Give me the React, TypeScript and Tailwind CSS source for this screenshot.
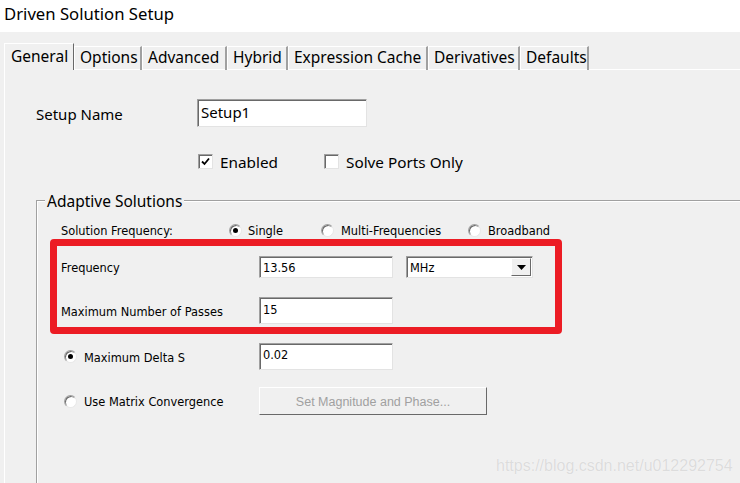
import React from "react";

const big = { fontFamily: '"Noto Sans", "Open Sans", sans-serif' };
const small = { fontFamily: '"DejaVu Sans", Verdana, sans-serif' };

function Sunken({ className = "", children }: { className?: string; children?: React.ReactNode }) {
  return (
    <div
      className={`bg-white border border-t-[#a0a0a0] border-l-[#a0a0a0] border-r-[#e3e3e3] border-b-[#e3e3e3] shadow-[inset_1px_1px_0_#696969] ${className}`}
    >
      {children}
    </div>
  );
}

function Check({ checked }: { checked?: boolean }) {
  return (
    <Sunken className="w-[15px] h-[15px] flex items-center justify-center">
      {checked && (
        <svg width="9" height="9" viewBox="0 0 9 9">
          <path d="M1 4.5 L3.5 7 L8 1.5" stroke="#000" strokeWidth="1.8" fill="none" />
        </svg>
      )}
    </Sunken>
  );
}

function Radio({ checked }: { checked?: boolean }) {
  return (
    <div className="w-[13px] h-[13px] rounded-full bg-white border border-t-[#a0a0a0] border-l-[#a0a0a0] border-r-[#e8e8e8] border-b-[#e8e8e8] shadow-[inset_1px_1px_0_#696969] flex items-center justify-center">
      {checked && <div className="w-[5px] h-[5px] rounded-full bg-black" />}
    </div>
  );
}

const tabs = [
  { label: "General", w: 70 },
  { label: "Options", w: 68 },
  { label: "Advanced", w: 85 },
  { label: "Hybrid", w: 61 },
  { label: "Expression Cache", w: 140 },
  { label: "Derivatives", w: 92 },
  { label: "Defaults", w: 69 },
];

export default function App() {
  return (
    <div className="w-[740px] h-[483px] bg-[#f0f0f0] overflow-hidden relative text-black">
      {/* title */}
      <div className="h-[32px] bg-white flex items-start pl-[4px] pt-[1px] text-[16.7px]" style={big}>
        Driven Solution Setup
      </div>

      {/* tabs */}
      <div className="flex items-end pl-[4px] mt-[11px] h-[27px]" style={big}>
        {tabs.map((t, i) =>
          i === 0 ? (
            <div
              key={t.label}
              className="h-[27px] border-l border-t border-white border-r border-r-[#696969] bg-[#f0f0f0] flex items-start pt-[1px] pl-[6px] text-[15.5px] relative z-10"
              style={{ width: t.w }}
            >
              {t.label}
            </div>
          ) : (
            <div
              key={t.label}
              className="h-[24px] border-l border-t border-white border-r-2 border-r-[#a0a0a0] flex items-start pl-[5px] text-[15.5px] leading-[20px]"
              style={{ width: t.w }}
            >
              {t.label}
            </div>
          )
        )}
      </div>

      {/* panel */}
      <div className="border-t border-l border-white ml-[4px] h-[420px] -mt-[1px]">
        {/* setup name */}
        <div className="flex items-center pl-[31px] mt-[29px] h-[28px]" style={big}>
          <div className="w-[161px] text-[15px] pt-[2px]">Setup Name</div>
          <Sunken className="w-[170px] h-[28px] text-[15px] pl-[3px] leading-[24px]">Setup1</Sunken>
        </div>

        {/* checkboxes */}
        <div className="flex items-center pl-[193px] mt-[27px] h-[15px] text-[15.3px]" style={big}>
          <Check checked />
          <span className="ml-[7px] w-[104px] pt-[2px]">Enabled</span>
          <Check />
          <span className="ml-[7px] pt-[2px]">Solve Ports Only</span>
        </div>

        {/* group */}
        <div className="relative ml-[31px] mt-[31px] h-[300px] border-t border-l border-[#a0a0a0] shadow-[inset_1px_1px_0_#fff]">
          <span
            className="absolute -top-[12px] left-[8px] px-[2px] bg-[#f0f0f0] text-[15.5px] leading-[24px]"
            style={big}
          >
            Adaptive Solutions
          </span>

          <div className="text-[11.4px]" style={small}>
            {/* solution frequency */}
            <div className="flex items-center pl-[24px] mt-[21px] h-[16px]">
              <div className="w-[168px] pt-[4px]">Solution Frequency:</div>
              <Radio checked />
              <span className="ml-[6px] w-[73px] pt-[4px]">Single</span>
              <Radio />
              <span className="ml-[7px] w-[127px] pt-[4px]">Multi-Frequencies</span>
              <Radio />
              <span className="ml-[7px] pt-[4px]">Broadband</span>
            </div>

            {/* frequency */}
            <div className="flex items-center pl-[24px] mt-[18px] h-[22px]">
              <div className="w-[198px] pt-[4px]">Frequency</div>
              <Sunken className="w-[134px] h-[22px] pl-[3px] leading-[23px]">13.56</Sunken>
              <Sunken className="ml-[13px] w-[127px] h-[22px] flex items-center justify-between">
                <span className="pl-[3px] pt-[3px]">MHz</span>
                <div className="w-[20px] h-[18px] mr-[1px] bg-[#f0f0f0] border border-t-white border-l-white border-r-[#696969] border-b-[#696969] flex items-center justify-center">
                  <svg width="9" height="5" viewBox="0 0 9 5">
                    <path d="M0 0 H9 L4.5 5 Z" fill="#000" />
                  </svg>
                </div>
              </Sunken>
            </div>

            {/* passes */}
            <div className="flex items-center pl-[24px] mt-[19px] h-[27px]">
              <div className="w-[198px] pt-[4px]">Maximum Number of Passes</div>
              <Sunken className="w-[134px] h-[27px] pl-[3px] leading-[24px]">15</Sunken>
            </div>

            {/* delta s */}
            <div className="flex items-center pl-[27px] mt-[19px] h-[27px]">
              <Radio checked />
              <div className="ml-[7px] w-[175px] pt-[4px]">Maximum Delta S</div>
              <Sunken className="w-[134px] h-[27px] pl-[3px] leading-[22px]">0.02</Sunken>
            </div>

            {/* matrix */}
            <div className="flex items-center pl-[27px] mt-[17px] h-[28px]">
              <Radio />
              <div className="ml-[7px] w-[175px] pt-[4px]">Use Matrix Convergence</div>
              <div
                className="w-[228px] h-[28px] bg-[#f0f0f0] border border-t-white border-l-white border-r-[#696969] border-b-[#696969] flex items-center justify-center text-[#a0a0a0] text-[12.5px] pt-[2px]"
                style={{ fontFamily: '"Liberation Sans", Arial, sans-serif' }}
              >
                Set Magnitude and Phase...
              </div>
            </div>
          </div>
        </div>
      </div>

      {/* annotation box */}
      <div className="absolute left-[50px] top-[239px] w-[512px] h-[95px] border-[7px] border-[#ec1c24] rounded-[4px] pointer-events-none" />

      {/* watermark */}
      <div
        className="absolute left-[496px] top-[454px] text-[16px] text-[#dcdcdc] [text-shadow:0_0_1px_#fff]"
        style={{ fontFamily: '"Liberation Sans", Arial, sans-serif' }}
      >
        https://blog.csdn.net/u012292754
      </div>
    </div>
  );
}
